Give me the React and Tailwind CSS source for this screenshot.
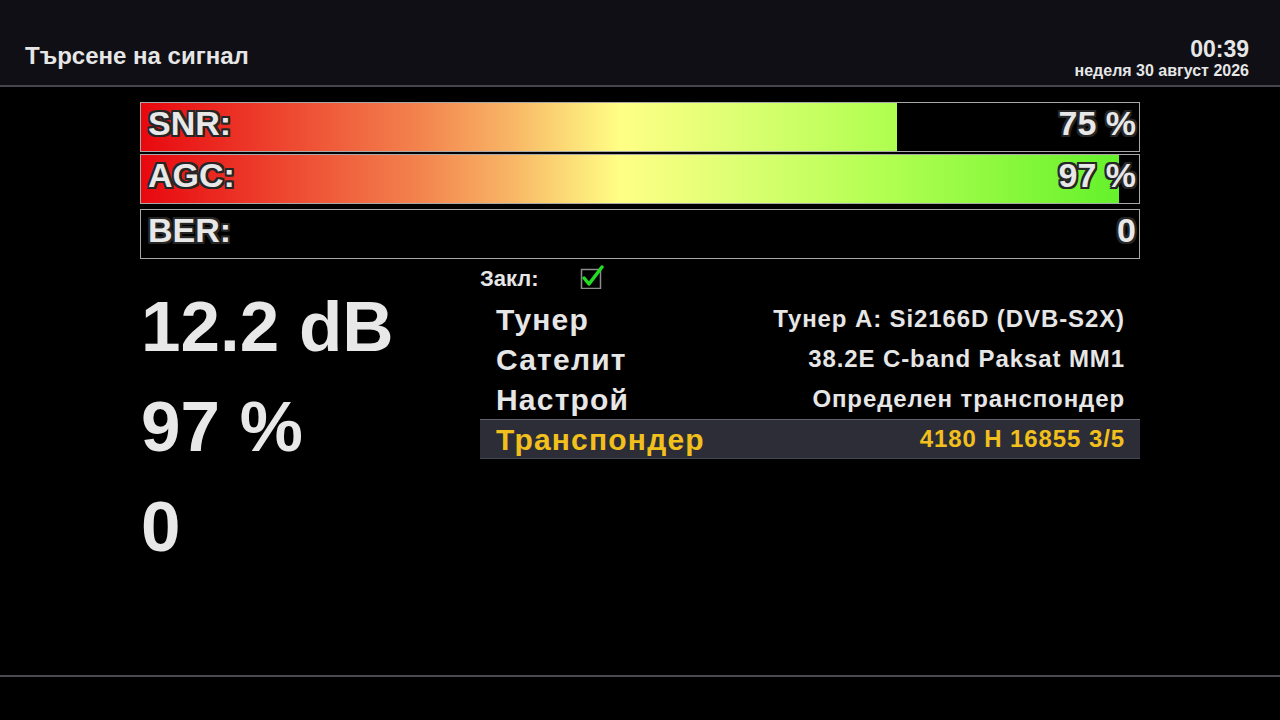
import React from "react";

const outline =
  "[text-shadow:-2px_-2px_0_#262626,2px_-2px_0_#262626,-2px_2px_0_#262626,2px_2px_0_#262626,0_-2px_0_#262626,0_2px_0_#262626,-2px_0_0_#262626,2px_0_0_#262626]";

function Bar({ label, value, pct, className }) {
  return (
    <div className={"relative h-[50px] border border-[#a8a8a8] bg-black overflow-hidden " + className}>
      {pct > 0 && (
        <>
          <div className="absolute inset-0 bg-[linear-gradient(to_right,#e8080f_0%,#ec3326_10%,#f3844e_28%,#f8b565_37%,#ffff85_48%,#dcff72_60%,#b0ff50_75%,#5ef028_100%)]" />
          <div className="absolute top-0 right-0 bottom-0 bg-black" style={{ width: `${100 - pct}%` }} />
        </>
      )}
      <div
        className={
          "relative flex h-full items-center justify-between pb-[8px] pl-[7px] pr-[3px] text-[34px] font-bold leading-none text-[#e8e8e8] " +
          outline
        }
      >
        <span>{label}</span>
        <span>{value}</span>
      </div>
    </div>
  );
}

function Row({ label, value, active }) {
  return (
    <div
      className={
        "flex h-[40px] items-center justify-between pl-[16px] pr-[15px] font-bold " +
        (active
          ? "bg-[#2c2d37] border-t border-b border-t-[#62636e] border-b-[#45464f] text-[#f2c01c]"
          : "text-[#e6e6e6]")
      }
    >
      <span className="text-[30px] tracking-[1.2px]">{label}</span>
      <span className="text-[24px] tracking-[0.9px]">{value}</span>
    </div>
  );
}

export default function App() {
  return (
    <div className="relative h-[720px] w-[1280px] overflow-hidden bg-black font-['Liberation_Sans',Arial,sans-serif] text-[#e8e8e8]">
      <header className="flex h-[87px] items-start justify-between border-b-2 border-[#45454e] bg-[#0f0f15] pl-[25px] pr-[31px]">
        <div className="pt-[42px] text-[24px] font-bold leading-[28px] text-[#e6e6e6]">Търсене на сигнал</div>
        <div className="flex flex-col items-end pt-[37px]">
          <div className="text-[23px] font-bold leading-[25px] text-[#e6e6e6]">00:39</div>
          <div className="text-[16px] font-bold leading-[18px] text-[#e6e6e6]">неделя 30 август 2026</div>
        </div>
      </header>

      <main className="ml-[140px] w-[1000px] pt-[15px]">
        <Bar label="SNR:" value="75 %" pct={75.7} />
        <Bar label="AGC:" value="97 %" pct={98} className="mt-[2px]" />
        <Bar label="BER:" value="0" pct={0} className="mt-[5px]" />

        <div className="mt-[8px] flex">
          <div className="w-[340px] pt-[10px] pl-[1px] text-[71px] font-bold leading-[100px] text-[#e8e8e8]">
            <div>12.2 dB</div>
            <div>97 %</div>
            <div>0</div>
          </div>
          <div className="w-[660px]">
            <div className="flex h-[22px] items-center">
              <span className="w-[100px] text-[22px] font-bold text-[#e6e6e6]">Закл:</span>
              <svg width="24" height="24" viewBox="0 0 24 24" className="-mt-[3px]">
                <rect x="1.5" y="4.5" width="19" height="19" fill="none" stroke="#8c8c8c" strokeWidth="1.5" />
                <path d="M4 13 L9 19 L22 2" fill="none" stroke="#22dd22" strokeWidth="3.5" strokeLinecap="round" strokeLinejoin="round" />
              </svg>
            </div>
            <div className="mt-[10px]">
              <Row label="Тунер" value="Тунер А: Si2166D (DVB-S2X)" />
              <Row label="Сателит" value="38.2E C-band Paksat MM1" />
              <Row label="Настрой" value="Определен транспондер" />
              <Row label="Транспондер" value="4180 H 16855 3/5" active />
            </div>
          </div>
        </div>
      </main>

      <div className="absolute left-0 right-0 top-[675px] h-[2px] bg-[#4a4a52]" />
    </div>
  );
}
